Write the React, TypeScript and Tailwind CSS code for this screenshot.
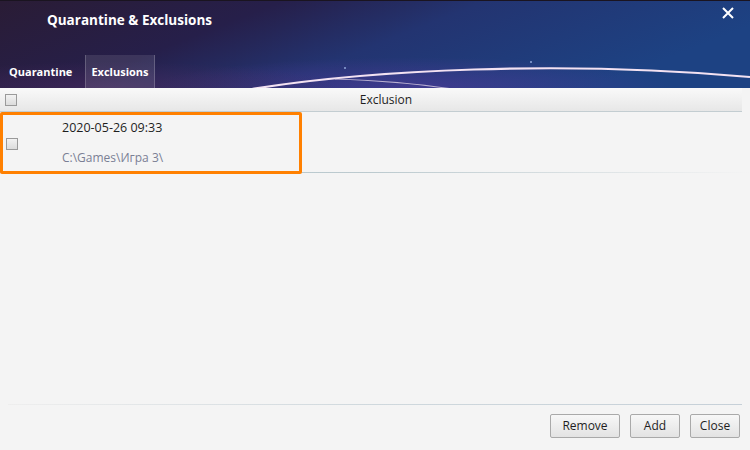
import React from "react";

const font = { fontFamily: '"Open Sans", "Noto Sans", "DejaVu Sans", sans-serif' };

const Checkbox = () => (
  <div className="w-[12px] h-[12px] border border-[#9a9a9a] bg-gradient-to-b from-[#f2f2f2] to-[#dcdcdc]" />
);

const Button = ({ label, width }: { label: string; width: string }) => (
  <button
    type="button"
    className={`${width} h-[24px] rounded-[2px] border border-[#a9a9a9] bg-gradient-to-b from-[#f7f7f7] to-[#e3e3e3] text-[12px] text-[#1e1e1e] flex items-center justify-center`}
  >
    {label}
  </button>
);

const HeaderArt = () => (
  <svg className="absolute inset-0" width="750" height="88" viewBox="0 0 750 88">
    <defs>
      <linearGradient id="bg" x1="0" y1="0" x2="1" y2="0.3">
        <stop offset="0" stopColor="#2a1c35" />
        <stop offset="0.35" stopColor="#261f4a" />
        <stop offset="0.6" stopColor="#233471" />
        <stop offset="1" stopColor="#1d4283" />
      </linearGradient>
      <radialGradient id="glow" cx="0.55" cy="1" r="0.35">
        <stop offset="0" stopColor="#5a3aa0" stopOpacity="0.55" />
        <stop offset="1" stopColor="#5a3aa0" stopOpacity="0" />
      </radialGradient>
      <radialGradient id="glow2" cx="0.15" cy="1" r="0.3">
        <stop offset="0" stopColor="#4b2a5e" stopOpacity="0.6" />
        <stop offset="1" stopColor="#4b2a5e" stopOpacity="0" />
      </radialGradient>
    </defs>
    <rect width="750" height="88" fill="url(#bg)" />
    <rect width="750" height="88" fill="url(#glow)" />
    <rect width="750" height="88" fill="url(#glow2)" />
    <rect width="750" height="1" fill="#1a1420" />
    <path d="M 252 89 C 370 70, 560 60, 750 77" stroke="#f3e2f2" strokeWidth="2.2" fill="none" />
    <path d="M 335 79 C 390 81, 420 84, 452 89" stroke="#d9cde4" strokeWidth="1.2" fill="none" opacity="0.8" />
    <circle cx="531" cy="62" r="1" fill="#8fa6d8" />
    <circle cx="345" cy="68" r="1" fill="#8fa6d8" />
  </svg>
);

export default function App() {
  return (
    <div className="w-[750px] h-[450px] bg-[#f4f4f4] flex flex-col overflow-hidden" style={font}>
      <div className="relative h-[88px] shrink-0">
        <HeaderArt />
        <div className="relative flex flex-col h-full">
          <div className="flex items-start justify-between h-[55px]">
            <div className="pl-[47px] pt-[10px] text-[13.5px] font-bold text-white">Quarantine &amp; Exclusions</div>
            <div className="pr-[16px] pt-[7px] text-white">
              <svg width="12" height="12" viewBox="0 0 12 12">
                <path d="M1 1 L11 11 M11 1 L1 11" stroke="#ffffff" strokeWidth="2" />
              </svg>
            </div>
          </div>
          <div className="flex items-end h-[33px] text-[11px] font-bold text-white">
            <div className="w-[85px] h-full flex items-center pl-[9px] pt-[2px]">Quarantine</div>
            <div className="w-[70px] h-full flex items-center justify-center pt-[2px] bg-white/10 border-x border-white/20">
              Exclusions
            </div>
          </div>
        </div>
      </div>

      <div className="flex h-[24px] shrink-0 items-center w-[742px] bg-gradient-to-b from-[#f9f9f9] to-[#e7e7e7] border-b border-[#c3cdd1]">
        <div className="w-[30px] pl-[5px]">
          <Checkbox />
        </div>
        <div className="flex-1 text-center text-[12px] text-[#1e1e1e]">Exclusion</div>
      </div>

      <div className="relative h-[61px] shrink-0 flex items-center">
        <div className="w-[62px] pl-[6px] pt-[2px]">
          <Checkbox />
        </div>
        <div className="flex flex-col text-[12px] pt-[1px]">
          <div className="text-[#1e1e1e] leading-[16px] text-[12.5px]">2020-05-26 09:33</div>
          <div className="text-[#7a7f94] leading-[16px] mt-[14px]">C:\Games\Игра 3\</div>
        </div>
        <div className="absolute left-0 right-0 bottom-0 h-[1px] bg-gradient-to-r from-[#b3c7cc] via-[#bccacf] to-[#f4f4f4]" />
        <div className="absolute left-[0px] top-[0px] w-[302px] h-[62px] border-[3px] border-[#ff8000] rounded-[2px]" />
      </div>

      <div className="flex-1" />

      <div className="mx-[8px] h-[1px] bg-gradient-to-r from-[#eeeeee] via-[#cfd8dd] to-[#c6d0d8]" />
      <div className="flex justify-end gap-[10px] pr-[10px] pt-[9px] pb-[12px]">
        <Button label="Remove" width="w-[70px]" />
        <Button label="Add" width="w-[50px]" />
        <Button label="Close" width="w-[50px]" />
      </div>
    </div>
  );
}
